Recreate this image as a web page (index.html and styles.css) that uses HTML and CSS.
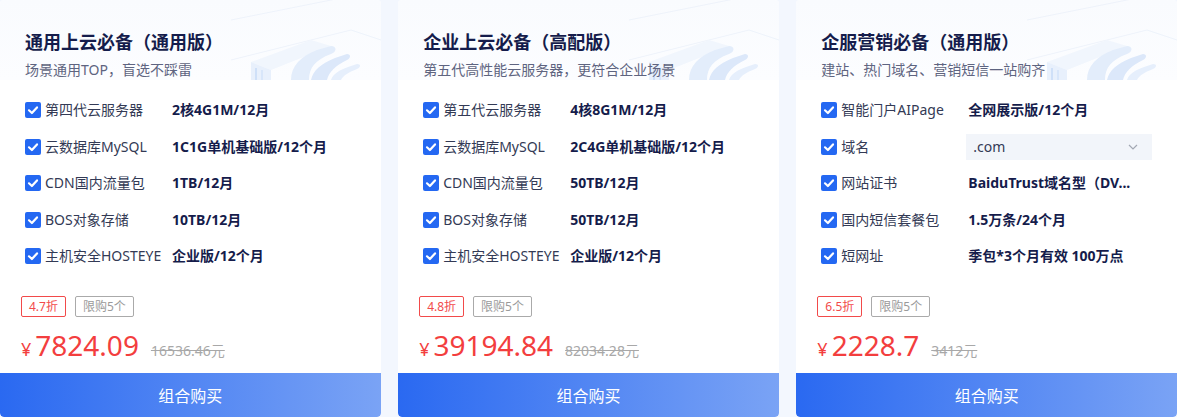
FILE: index.html
```html
<!DOCTYPE html>
<html lang="zh-CN">
<head>
<meta charset="utf-8">
<title>组合套餐</title>
<link rel="stylesheet" href="styles.css">
</head>
<body>
<div class="page">

  <div class="card">
    <div class="head">
      <svg class="deco" viewBox="0 0 150 80" width="150" height="80" aria-hidden="true">
        <path d="M0 20 L150 -10" stroke="#eef3fb" stroke-width="1" fill="none"/>
        <path d="M0 60 L120 30 L150 40" stroke="#eef3fb" stroke-width="1" fill="none"/>
        <path d="M20 62 L80 40 L100 46 L40 70 Z" fill="#f1f6fd"/>
        <path d="M20 62 L40 70 L40 80 L20 80 Z" fill="#e8f0fc"/>
        <rect x="24" y="68" width="2" height="12" fill="#cfe0f8"/>
        <rect x="30" y="70" width="2" height="10" fill="#d8e6fa"/>
        <path d="M60 80 C60 66 70 56 86 50 L100 46 C106 46 106 52 100 54 C84 60 78 68 78 80 Z" fill="#e3edfb"/>
        <path d="M80 80 C82 70 90 64 104 58 L116 54 C120 54 120 58 116 60 C104 66 98 72 96 80 Z" fill="#dce8fa"/>
        <path d="M100 80 C102 74 108 70 120 66 L126 64 C130 64 130 67 126 69 C116 73 112 76 110 80 Z" fill="#e6effc"/>
      </svg>
      <h3 class="title">通用上云必备（通用版）</h3>
      <p class="sub">场景通用TOP，盲选不踩雷</p>
    </div>
    <ul class="items">
      <li class="item"><span class="cb"><svg viewBox="0 0 16 16" width="16" height="16"><path d="M4 8.3 L6.9 11 L12 5.4" fill="none" stroke="#fff" stroke-width="2.2" stroke-linecap="round" stroke-linejoin="round"/></svg></span><span class="label">第四代云服务器</span><span class="val">2核4G1M/12月</span></li>
      <li class="item"><span class="cb"><svg viewBox="0 0 16 16" width="16" height="16"><path d="M4 8.3 L6.9 11 L12 5.4" fill="none" stroke="#fff" stroke-width="2.2" stroke-linecap="round" stroke-linejoin="round"/></svg></span><span class="label">云数据库MySQL</span><span class="val">1C1G单机基础版/12个月</span></li>
      <li class="item"><span class="cb"><svg viewBox="0 0 16 16" width="16" height="16"><path d="M4 8.3 L6.9 11 L12 5.4" fill="none" stroke="#fff" stroke-width="2.2" stroke-linecap="round" stroke-linejoin="round"/></svg></span><span class="label">CDN国内流量包</span><span class="val">1TB/12月</span></li>
      <li class="item"><span class="cb"><svg viewBox="0 0 16 16" width="16" height="16"><path d="M4 8.3 L6.9 11 L12 5.4" fill="none" stroke="#fff" stroke-width="2.2" stroke-linecap="round" stroke-linejoin="round"/></svg></span><span class="label">BOS对象存储</span><span class="val">10TB/12月</span></li>
      <li class="item"><span class="cb"><svg viewBox="0 0 16 16" width="16" height="16"><path d="M4 8.3 L6.9 11 L12 5.4" fill="none" stroke="#fff" stroke-width="2.2" stroke-linecap="round" stroke-linejoin="round"/></svg></span><span class="label">主机安全HOSTEYE</span><span class="val">企业版/12个月</span></li>
    </ul>
    <div class="foot">
      <div class="tags"><span class="tag tag-red">4.7折</span><span class="tag tag-grey">限购5个</span></div>
      <div class="price"><span class="yen">¥</span><span class="num">7824.09</span><span class="orig">16536.46元</span></div>
    </div>
    <button class="buy">组合购买</button>
  </div>

  <div class="card">
    <div class="head">
      <svg class="deco" viewBox="0 0 150 80" width="150" height="80" aria-hidden="true">
        <path d="M0 20 L150 -10" stroke="#eef3fb" stroke-width="1" fill="none"/>
        <path d="M0 60 L120 30 L150 40" stroke="#eef3fb" stroke-width="1" fill="none"/>
        <path d="M20 62 L80 40 L100 46 L40 70 Z" fill="#f1f6fd"/>
        <path d="M20 62 L40 70 L40 80 L20 80 Z" fill="#e8f0fc"/>
        <rect x="24" y="68" width="2" height="12" fill="#cfe0f8"/>
        <rect x="30" y="70" width="2" height="10" fill="#d8e6fa"/>
        <path d="M60 80 C60 66 70 56 86 50 L100 46 C106 46 106 52 100 54 C84 60 78 68 78 80 Z" fill="#e3edfb"/>
        <path d="M80 80 C82 70 90 64 104 58 L116 54 C120 54 120 58 116 60 C104 66 98 72 96 80 Z" fill="#dce8fa"/>
        <path d="M100 80 C102 74 108 70 120 66 L126 64 C130 64 130 67 126 69 C116 73 112 76 110 80 Z" fill="#e6effc"/>
      </svg>
      <h3 class="title">企业上云必备（高配版）</h3>
      <p class="sub">第五代高性能云服务器，更符合企业场景</p>
    </div>
    <ul class="items">
      <li class="item"><span class="cb"><svg viewBox="0 0 16 16" width="16" height="16"><path d="M4 8.3 L6.9 11 L12 5.4" fill="none" stroke="#fff" stroke-width="2.2" stroke-linecap="round" stroke-linejoin="round"/></svg></span><span class="label">第五代云服务器</span><span class="val">4核8G1M/12月</span></li>
      <li class="item"><span class="cb"><svg viewBox="0 0 16 16" width="16" height="16"><path d="M4 8.3 L6.9 11 L12 5.4" fill="none" stroke="#fff" stroke-width="2.2" stroke-linecap="round" stroke-linejoin="round"/></svg></span><span class="label">云数据库MySQL</span><span class="val">2C4G单机基础版/12个月</span></li>
      <li class="item"><span class="cb"><svg viewBox="0 0 16 16" width="16" height="16"><path d="M4 8.3 L6.9 11 L12 5.4" fill="none" stroke="#fff" stroke-width="2.2" stroke-linecap="round" stroke-linejoin="round"/></svg></span><span class="label">CDN国内流量包</span><span class="val">50TB/12月</span></li>
      <li class="item"><span class="cb"><svg viewBox="0 0 16 16" width="16" height="16"><path d="M4 8.3 L6.9 11 L12 5.4" fill="none" stroke="#fff" stroke-width="2.2" stroke-linecap="round" stroke-linejoin="round"/></svg></span><span class="label">BOS对象存储</span><span class="val">50TB/12月</span></li>
      <li class="item"><span class="cb"><svg viewBox="0 0 16 16" width="16" height="16"><path d="M4 8.3 L6.9 11 L12 5.4" fill="none" stroke="#fff" stroke-width="2.2" stroke-linecap="round" stroke-linejoin="round"/></svg></span><span class="label">主机安全HOSTEYE</span><span class="val">企业版/12个月</span></li>
    </ul>
    <div class="foot">
      <div class="tags"><span class="tag tag-red">4.8折</span><span class="tag tag-grey">限购5个</span></div>
      <div class="price"><span class="yen">¥</span><span class="num">39194.84</span><span class="orig">82034.28元</span></div>
    </div>
    <button class="buy">组合购买</button>
  </div>

  <div class="card">
    <div class="head">
      <svg class="deco" viewBox="0 0 150 80" width="150" height="80" aria-hidden="true">
        <path d="M0 20 L150 -10" stroke="#eef3fb" stroke-width="1" fill="none"/>
        <path d="M0 60 L120 30 L150 40" stroke="#eef3fb" stroke-width="1" fill="none"/>
        <path d="M20 62 L80 40 L100 46 L40 70 Z" fill="#f1f6fd"/>
        <path d="M20 62 L40 70 L40 80 L20 80 Z" fill="#e8f0fc"/>
        <rect x="24" y="68" width="2" height="12" fill="#cfe0f8"/>
        <rect x="30" y="70" width="2" height="10" fill="#d8e6fa"/>
        <path d="M60 80 C60 66 70 56 86 50 L100 46 C106 46 106 52 100 54 C84 60 78 68 78 80 Z" fill="#e3edfb"/>
        <path d="M80 80 C82 70 90 64 104 58 L116 54 C120 54 120 58 116 60 C104 66 98 72 96 80 Z" fill="#dce8fa"/>
        <path d="M100 80 C102 74 108 70 120 66 L126 64 C130 64 130 67 126 69 C116 73 112 76 110 80 Z" fill="#e6effc"/>
      </svg>
      <h3 class="title">企服营销必备（通用版）</h3>
      <p class="sub">建站、热门域名、营销短信一站购齐</p>
    </div>
    <ul class="items">
      <li class="item"><span class="cb"><svg viewBox="0 0 16 16" width="16" height="16"><path d="M4 8.3 L6.9 11 L12 5.4" fill="none" stroke="#fff" stroke-width="2.2" stroke-linecap="round" stroke-linejoin="round"/></svg></span><span class="label">智能门户AIPage</span><span class="val">全网展示版/12个月</span></li>
      <li class="item"><span class="cb"><svg viewBox="0 0 16 16" width="16" height="16"><path d="M4 8.3 L6.9 11 L12 5.4" fill="none" stroke="#fff" stroke-width="2.2" stroke-linecap="round" stroke-linejoin="round"/></svg></span><span class="label">域名</span><span class="select"><span class="select-text">.com</span><svg class="chev" viewBox="0 0 10 6" width="10" height="6"><path d="M1 1 L5 5 L9 1" fill="none" stroke="#a3a8b3" stroke-width="1.2"/></svg></span></li>
      <li class="item"><span class="cb"><svg viewBox="0 0 16 16" width="16" height="16"><path d="M4 8.3 L6.9 11 L12 5.4" fill="none" stroke="#fff" stroke-width="2.2" stroke-linecap="round" stroke-linejoin="round"/></svg></span><span class="label">网站证书</span><span class="val">BaiduTrust域名型（DV...</span></li>
      <li class="item"><span class="cb"><svg viewBox="0 0 16 16" width="16" height="16"><path d="M4 8.3 L6.9 11 L12 5.4" fill="none" stroke="#fff" stroke-width="2.2" stroke-linecap="round" stroke-linejoin="round"/></svg></span><span class="label">国内短信套餐包</span><span class="val">1.5万条/24个月</span></li>
      <li class="item"><span class="cb"><svg viewBox="0 0 16 16" width="16" height="16"><path d="M4 8.3 L6.9 11 L12 5.4" fill="none" stroke="#fff" stroke-width="2.2" stroke-linecap="round" stroke-linejoin="round"/></svg></span><span class="label">短网址</span><span class="val">季包*3个月有效 100万点</span></li>
    </ul>
    <div class="foot">
      <div class="tags"><span class="tag tag-red">6.5折</span><span class="tag tag-grey">限购5个</span></div>
      <div class="price"><span class="yen">¥</span><span class="num">2228.7</span><span class="orig">3412元</span></div>
    </div>
    <button class="buy">组合购买</button>
  </div>

</div>
</body>
</html>
```

FILE: styles.css
```css
* {
  box-sizing: border-box;
}

html, body {
  margin: 0;
  padding: 0;
}

body {
  background: #f3f7fe;
  font-family: "Noto Sans", "Noto Sans CJK SC", sans-serif;
  color: #333a55;
  height: 417px;
  overflow: hidden;
}

.page {
  display: grid;
  grid-template-columns: repeat(3, 1fr);
  column-gap: 17.5px;
  height: 417px;
}

.card {
  background: #fff;
  border-radius: 4px;
  overflow: hidden;
  display: flex;
  flex-direction: column;
  height: 417px;
}

.head {
  position: relative;
  height: 80px;
  padding: 30px 25px 0;
  background: linear-gradient(180deg, #f9fbfe 0%, #fcfdff 100%);
}

.deco {
  position: absolute;
  right: 0;
  bottom: 0;
}

.title {
  position: relative;
  margin: 0;
  font-size: 18px;
  line-height: 24px;
  font-weight: 700;
  color: #151c4b;
}

.sub {
  position: relative;
  margin: 6px 0 0;
  font-size: 14px;
  line-height: 20px;
  color: #5e6480;
}

.items {
  list-style: none;
  margin: 0;
  padding: 12px 25px 0;
}

.item {
  display: flex;
  align-items: center;
  height: 36.5px;
}

.cb {
  flex: none;
  width: 16px;
  height: 16px;
  border-radius: 2px;
  background: #2468f2;
  display: flex;
}

.label {
  flex: none;
  width: 120px;
  margin-left: 4px;
  margin-right: 7px;
  font-size: 14px;
  line-height: 20px;
  color: #333a55;
  white-space: nowrap;
}

.val {
  font-size: 14px;
  line-height: 20px;
  font-weight: 700;
  color: #151c4b;
  white-space: nowrap;
}

.select {
  flex: none;
  width: 186px;
  height: 26px;
  margin-left: -2px;
  padding: 0 14px 0 7px;
  background: #f2f5fa;
  display: flex;
  align-items: center;
  justify-content: space-between;
}

.select-text {
  font-size: 14px;
  color: #333a55;
}

.foot {
  padding: 0 21px;
}

.tags {
  display: flex;
  gap: 9px;
  margin-top: 21px;
}

.tag {
  height: 21px;
  padding: 0 7px;
  border: 1px solid;
  border-radius: 2px;
  font-size: 12px;
  line-height: 19px;
}

.tag-red {
  color: #f24a4a;
  border-color: #f24a4a;
}

.tag-grey {
  color: #9a9a9a;
  border-color: #aaaaaa;
}

.price {
  display: flex;
  align-items: baseline;
  margin-top: 8px;
  height: 40px;
  line-height: 40px;
  color: #f33e3e;
}

.yen {
  font-size: 18px;
  margin-right: 4px;
}

.num {
  font-size: 28px;
  margin-right: 12px;
}

.orig {
  font-size: 14px;
  color: #a8a8a8;
  text-decoration: line-through;
}

.buy {
  margin-top: auto;
  height: 44px;
  border: none;
  border-radius: 0 0 4px 4px;
  background: linear-gradient(90deg, #2a69f1 0%, #7aa3f5 100%);
  color: #fff;
  font-family: "Noto Sans", "Noto Sans CJK SC", sans-serif;
  font-size: 16px;
  cursor: pointer;
}
```
